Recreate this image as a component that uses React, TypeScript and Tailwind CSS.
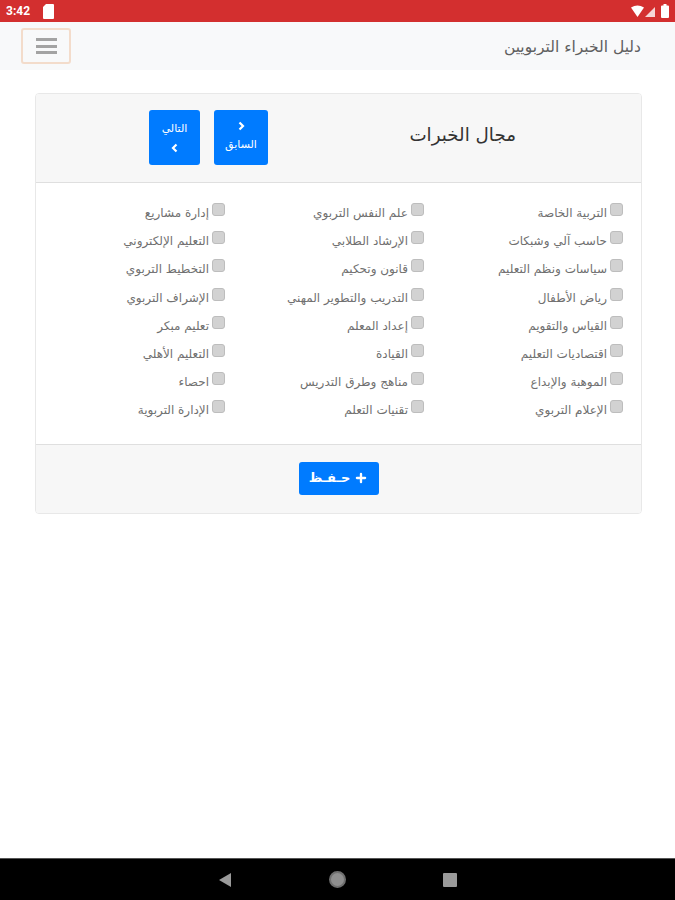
import { Plus } from 'lucide-react';

const items = [
    ['التربية الخاصة', 'علم النفس التربوي', 'إدارة مشاريع'],
    ['حاسب آلي وشبكات', 'الإرشاد الطلابي', 'التعليم الإلكتروني'],
    ['سياسات ونظم التعليم', 'قانون وتحكيم', 'التخطيط التربوي'],
    ['رياض الأطفال', 'التدريب والتطوير المهني', 'الإشراف التربوي'],
    ['القياس والتقويم', 'إعداد المعلم', 'تعليم مبكر'],
    ['اقتصاديات التعليم', 'القيادة', 'التعليم الأهلي'],
    ['الموهبة والإبداع', 'مناهج وطرق التدريس', 'احصاء'],
    ['الإعلام التربوي', 'تقنيات التعلم', 'الإدارة التربوية'],
];

function StatusBar() {
    return (
        <div dir="ltr" className="h-[22px] bg-[#d32f2f] flex items-center justify-between pl-[6px] pr-[6px] text-white">
            <div className="flex items-center gap-[13px]">
                <span className="text-[12px] font-bold font-['Roboto',sans-serif]">3:42</span>
                <svg width="11" height="15" viewBox="0 0 11 15">
                    <path d="M3 0h7a1 1 0 0 1 1 1v13a1 1 0 0 1-1 1H1a1 1 0 0 1-1-1V3z" fill="#fff" />
                </svg>
            </div>
            <div className="flex items-center gap-[5px]">
                <svg width="25" height="13" viewBox="0 0 25 13">
                    <path d="M0 2.500Q6.500 -1.500 13 2.500L6.500 12z" fill="#fff" />
                    <path d="M14 12L24 2v10z" fill="#fff" opacity="0.8" />
                </svg>
                <svg width="8" height="14" viewBox="0 0 8 14">
                    <path d="M2.500 0h3v1.500H7a1 1 0 0 1 1 1V13a1 1 0 0 1-1 1H1a1 1 0 0 1-1-1V2.500a1 1 0 0 1 1-1h1.500z" fill="#fff" />
                </svg>
            </div>
        </div>
    );
}

function Navbar() {
    return (
        <div className="h-[48px] bg-[#f8f9fa] flex items-center justify-between pr-[34px] pl-[21px]">
            <span className="text-[15.500px] text-[#5f5f5f] pt-[4px]">دليل الخبراء التربويين</span>
            <div className="w-[50px] h-[36px] border-2 border-[#f3dccb] rounded-[3px] flex flex-col items-center justify-center gap-[3.500px]">
                <span className="w-[21px] h-[3px] bg-[#a3a3a3]" />
                <span className="w-[21px] h-[3px] bg-[#a3a3a3]" />
                <span className="w-[21px] h-[3px] bg-[#a3a3a3]" />
            </div>
        </div>
    );
}

function Check({ label }: { label: string }) {
    return (
        <label className="flex items-start gap-[3px] h-[28.200px] text-[12px] text-[#707070]">
            <span className="w-[13px] h-[13px] mt-[1px] rounded-[3px] bg-[#d2d2d2] border border-[#bdbdbd] shrink-0" />
            <span className="mt-[2px] leading-[18px] whitespace-nowrap">{label}</span>
        </label>
    );
}

export default function App() {
    return (
        <div dir="rtl" className="min-h-[900px] bg-white flex flex-col font-['DejaVu_Sans',sans-serif]">
            <StatusBar />
            <Navbar />
            <div className="flex-1 pr-[33px] pl-[35px] pt-[23px]">
                <div className="border border-[#e8e8e8] rounded-[4px] overflow-hidden">
                    <div className="h-[89px] pb-[2px] bg-[#f7f7f7] border-b border-[#dfdfdf] flex items-center pr-[125px]">
                        <h1 className="text-[18.300px] text-[#333] w-[106px] whitespace-nowrap pb-[4px]">مجال الخبرات</h1>
                        <div className="flex items-center mr-[142px] gap-[14px]">
                            <button className="w-[54px] h-[55px] bg-[#007bff] rounded-[3px] text-white text-[11px] flex flex-col items-center justify-center gap-[6px]">
                                <svg width="10" height="10" viewBox="0 0 10 10" fill="none" stroke="#fff" strokeWidth="2.200">
                                    <path d="M3.500 1.500L7 5L3.500 8.500" />
                                </svg>
                                <span>السابق</span>
                            </button>
                            <button className="w-[51px] h-[55px] bg-[#007bff] rounded-[3px] text-white text-[11px] flex flex-col items-center justify-center gap-[6px]">
                                <span>التالي</span>
                                <svg width="10" height="10" viewBox="0 0 10 10" fill="none" stroke="#fff" strokeWidth="2.200">
                                    <path d="M6.500 1.500L3 5L6.500 8.500" />
                                </svg>
                            </button>
                        </div>
                    </div>
                    <div className="h-[261px] pt-[19px] pr-[18px] grid grid-cols-[199px_199px_199px] content-start">
                        {items.flat().map((label) => (
                            <Check key={label} label={label} />
                        ))}
                    </div>
                    <div className="h-[69px] pb-[2px] bg-[#f7f7f7] border-t border-[#dfdfdf] flex items-center justify-center">
                        <button className="w-[80px] h-[33px] bg-[#007bff] rounded-[3px] text-white text-[13px] flex items-center justify-center gap-[4px]">
                            <Plus size={14} strokeWidth={4} />
                            <span className="font-bold">حـفـظ</span>
                        </button>
                    </div>
                </div>
            </div>
            <div dir="ltr" className="h-[42px] bg-black border-t border-[#555] flex items-center justify-center gap-[97px]">
                <svg width="14" height="16" viewBox="0 0 14 16"><path d="M13 1v14L1 8z" fill="#9a9a9a" /></svg>
                <span className="w-[17px] h-[17px] rounded-full bg-[#8f8f8f] border-2 border-[#6f6f6f]" />
                <span className="w-[14px] h-[14px] bg-[#9a9a9a] rounded-[1px]" />
            </div>
        </div>
    );
}
